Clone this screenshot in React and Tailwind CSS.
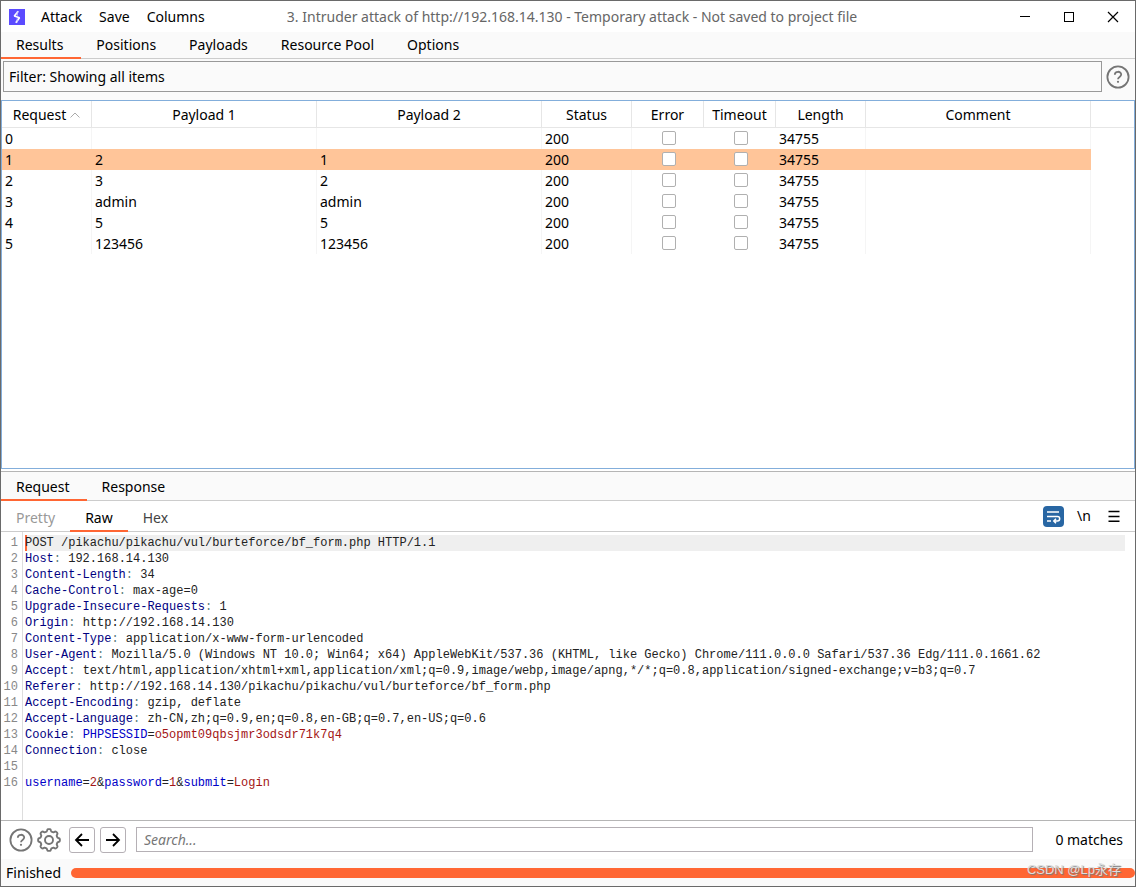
import React from "react";

const rows = [
  { id: 0, p1: "", p2: "" },
  { id: 1, p1: "2", p2: "1", selected: true },
  { id: 2, p1: "3", p2: "2" },
  { id: 3, p1: "admin", p2: "admin" },
  { id: 4, p1: "5", p2: "5" },
  { id: 5, p1: "123456", p2: "123456" },
];

const headers = [
  ["Host", "192.168.14.130"],
  ["Content-Length", "34"],
  ["Cache-Control", "max-age=0"],
  ["Upgrade-Insecure-Requests", "1"],
  ["Origin", "http://192.168.14.130"],
  ["Content-Type", "application/x-www-form-urlencoded"],
  ["User-Agent", "Mozilla/5.0 (Windows NT 10.0; Win64; x64) AppleWebKit/537.36 (KHTML, like Gecko) Chrome/111.0.0.0 Safari/537.36 Edg/111.0.1661.62"],
  ["Accept", "text/html,application/xhtml+xml,application/xml;q=0.9,image/webp,image/apng,*/*;q=0.8,application/signed-exchange;v=b3;q=0.7"],
  ["Referer", "http://192.168.14.130/pikachu/pikachu/vul/burteforce/bf_form.php"],
  ["Accept-Encoding", "gzip, deflate"],
  ["Accept-Language", "zh-CN,zh;q=0.9,en;q=0.8,en-GB;q=0.7,en-US;q=0.6"],
];

const Name = ({ children }) => <span className="text-[#00007f]">{children}</span>;
const Key = ({ children }) => <span className="text-[#0000c8]">{children}</span>;
const Val = ({ children }) => <span className="text-[#a31515]">{children}</span>;
const Colon = () => <span className="text-[#5f7f7f]">: </span>;

const lines = [
  "POST /pikachu/pikachu/vul/burteforce/bf_form.php HTTP/1.1",
  ...headers.map(([name, value]) => (
    <>
      <Name>{name}</Name>
      <Colon />
      {value}
    </>
  )),
  <>
    <Name>Cookie</Name>
    <Colon />
    <Key>PHPSESSID</Key>=<Val>o5opmt09qbsjmr3odsdr71k7q4</Val>
  </>,
  <>
    <Name>Connection</Name>
    <Colon />
    close
  </>,
  "",
  <>
    <Key>username</Key>=<Val>2</Val>&amp;<Key>password</Key>=<Val>1</Val>&amp;<Key>submit</Key>=<Val>Login</Val>
  </>,
];

function HelpIcon() {
  return (
    <svg className="size-6" viewBox="0 0 24 24" fill="none" stroke="#757575" strokeWidth="1.8">
      <circle cx="12" cy="12" r="10.6" />
      <path d="M8.800 9.800c0-4 6.400-4 6.400-.2 0 2.400-3.200 2.200-3.200 4.600" />
      <circle cx="12" cy="16.800" r="1.100" fill="#757575" stroke="none" />
    </svg>
  );
}

// Outline of a gear with eight rounded teeth, centred on (12, 12).
const gearPoints = Array.from({ length: 144 }, (_, i) => {
  const a = (i / 144) * Math.PI * 2;
  const r = 9.8 + 1.1 * Math.tanh(2.2 * Math.cos(8 * a));
  return `${(12 + r * Math.cos(a)).toFixed(2)},${(12 + r * Math.sin(a)).toFixed(2)}`;
}).join(" ");

function GearIcon() {
  return (
    <svg className="size-6" viewBox="0 0 24 24" fill="none" stroke="#757575" strokeWidth="1.9" strokeLinejoin="round">
      <circle cx="12" cy="12" r="4" />
      <polygon points={gearPoints} />
    </svg>
  );
}

function Arrow({ left }) {
  return (
    <svg className="size-4" viewBox="0 0 16 16" fill="none" stroke="#000" strokeWidth="1.8">
      <path d={left ? "M15 8H2M8 2L2 8l6 6" : "M1 8h13M8 2l6 6-6 6"} />
    </svg>
  );
}

function Tab({ children, active, tone = "text-black", pad = "pr-[18px] pl-[15px]" }) {
  return (
    <button
      type="button"
      className={`-mb-px border-b-2 ${pad} ${tone} ${active ? "border-[#ff6633]" : "border-transparent"}`}
    >
      {children}
    </button>
  );
}

const requestPad = "pt-[2px] pr-[17px] pl-[15px]";
const subPad = "pt-[4px] pr-[15px] pl-[15px]";
const thBase = "border-r border-b border-[#e6e6e6] p-0 pt-px text-center font-normal";
const tdBase = "border-r border-[#f5f5f5] py-0 pr-0 pl-[3px]";

function TickCell({ label }) {
  return (
    <td className="border-r border-transparent p-0 pb-[2px]">
      <input
        type="checkbox"
        aria-label={label}
        className="mx-auto block size-[14px] translate-x-px appearance-none rounded-[2px] border border-[#b0b0b0] bg-white"
      />
    </td>
  );
}

export default function App() {
  return (
    <div className="flex min-h-screen flex-col border border-[#6a6a6a] bg-white font-['Noto_Sans','Noto_Sans_CJK_SC',sans-serif] text-[14px] leading-5 text-black">
      <header className="grid h-[31px] shrink-0 grid-cols-[1fr_auto_1fr] items-center pl-2">
        <div className="flex items-center">
          <svg className="size-4" viewBox="0 0 16 16">
            <rect width="16" height="16" fill="#5b4bff" />
            <path d="M9.300 2.200L5.300 7l5.200 1.800-3.700 5" fill="none" stroke="#fff" strokeWidth="1.700" strokeLinejoin="bevel" />
            <path d="M8.200 2.500v4.200M8.200 9.300v4.200" fill="none" stroke="#c9c4ff" strokeWidth="1" />
          </svg>
          <nav className="ml-4 flex gap-[17px]">
            <button type="button">Attack</button>
            <button type="button">Save</button>
            <button type="button">Columns</button>
          </nav>
        </div>
        <h1 className="truncate text-center text-[#666]">
          3. Intruder attack of http://192.168.14.130 - Temporary attack - Not saved to project file
        </h1>
        <div className="flex justify-end">
          <button type="button" aria-label="Minimize" className="grid h-7 w-11 place-items-center">
            <svg className="size-3" viewBox="0 0 12 12" stroke="#000" shapeRendering="crispEdges"><path d="M1 5.500h10" /></svg>
          </button>
          <button type="button" aria-label="Maximize" className="grid h-7 w-11 place-items-center">
            <svg className="size-3" viewBox="0 0 12 12" fill="none" stroke="#000" shapeRendering="crispEdges"><path d="M1.500 1.500h9v9h-9z" /></svg>
          </button>
          <button type="button" aria-label="Close" className="grid h-7 w-11 place-items-center">
            <svg className="size-3" viewBox="0 0 12 12" stroke="#000" strokeWidth="1.200"><path d="M1 1l10 10M11 1L1 11" /></svg>
          </button>
        </div>
      </header>

      <nav className="flex h-[27px] shrink-0 border-b border-[#ccc] bg-[#fafafa]">
        <Tab active>Results</Tab>
        <Tab>Positions</Tab>
        <Tab>Payloads</Tab>
        <Tab>Resource Pool</Tab>
        <Tab>Options</Tab>
      </nav>

      <div className="flex h-[41px] shrink-0 items-start gap-1 bg-[#fafafa] pt-[2px] pr-[5px] pl-[2px]">
        <button type="button" className="h-[31px] flex-1 border border-[#999] px-[5px] text-left">
          Filter: Showing all items
        </button>
        <button type="button" aria-label="Help" className="grid h-[31px] place-items-center">
          <HelpIcon />
        </button>
      </div>

      <section className="flex-1 border border-[#83aedb]">
        <table className="w-full table-fixed border-separate border-spacing-0">
          <colgroup>
            <col className="w-[90px]" />
            <col className="w-[225px]" />
            <col className="w-[225px]" />
            <col className="w-[90px]" />
            <col className="w-[72px]" />
            <col className="w-[72px]" />
            <col className="w-[90px]" />
            <col className="w-[225px]" />
            <col />
          </colgroup>
          <thead>
            <tr className="h-[27px]">
              <th className={thBase}>
                <span className="flex items-center justify-center gap-1">
                  Request
                  <svg className="h-[6px] w-[10px]" viewBox="0 0 10 6" fill="none" stroke="#aaa"><path d="M.5 5.500L5 1l4.500 4.500" /></svg>
                </span>
              </th>
              <th className={thBase}>Payload 1</th>
              <th className={thBase}>Payload 2</th>
              <th className={thBase}>Status</th>
              <th className={thBase}>Error</th>
              <th className={thBase}>Timeout</th>
              <th className={thBase}>Length</th>
              <th className={thBase}>Comment</th>
              <td className="border-b border-[#e6e6e6] p-0" />
            </tr>
          </thead>
          <tbody>
            {rows.map((r) => (
              <tr key={r.id} className={r.selected ? "h-[21px] *:not-last:border-[#ffc599] *:not-last:bg-[#ffc599]" : "h-[21px]"}>
                <td className={tdBase}>{r.id}</td>
                <td className={tdBase}>{r.p1}</td>
                <td className={tdBase}>{r.p2}</td>
                <td className={tdBase}>200</td>
                <TickCell label={`Error, request ${r.id}`} />
                <TickCell label={`Timeout, request ${r.id}`} />
                <td className={tdBase}>34755</td>
                <td className={tdBase} />
                <td className="p-0" />
              </tr>
            ))}
          </tbody>
        </table>
      </section>

      <nav className="mt-[2px] flex h-[30px] shrink-0 border-t border-b border-t-[#b5b5b5] border-b-[#ccc] bg-[#fafafa]">
        <Tab active pad={requestPad}>Request</Tab>
        <Tab pad={requestPad}>Response</Tab>
      </nav>

      <div className="flex h-[31px] shrink-0 border-b border-[#ccc]">
        <Tab tone="text-[#999]" pad={subPad}>Pretty</Tab>
        <Tab active pad={subPad}>Raw</Tab>
        <Tab tone="text-[#444]" pad={subPad}>Hex</Tab>
        <div className="ml-auto flex items-center gap-[10px] pr-[11px]">
          <button type="button" aria-label="Word wrap" className="grid size-[21px] place-items-center rounded-[4px] bg-[#2866a3]">
            <svg className="size-[15px]" viewBox="0 0 15 15" fill="none" stroke="#fff" strokeWidth="1.500">
              <path d="M1 3h12M1 7.500h10.500a2.200 2.200 0 0 1 0 4.400H8M1 12h4M10 9.800L7.800 12l2.200 2.200" />
            </svg>
          </button>
          <button type="button" aria-label="Show newlines" className="w-5 text-center">\n</button>
          <button type="button" aria-label="Menu" className="grid size-5 place-items-center">
            <svg className="size-3" viewBox="0 0 12 12" stroke="#000" strokeWidth="1.400">
              <path d="M.5 1.500h11M.5 6.500h11M.5 11.200h11" />
            </svg>
          </button>
        </div>
      </div>

      <main className="flex shrink-0 border-b border-[#b5b5b5] pr-[10px] font-['Liberation_Mono',monospace] text-[12px] leading-4">
        <ol className="w-[22px] border-r border-[#ddd] pt-[3px] pr-1 text-right text-[#888]">
          {lines.map((_, i) => (
            <li key={i}>{i + 1}</li>
          ))}
        </ol>
        <div className="min-w-0 flex-1 pt-[3px] pb-[29px] text-[#222]">
          {lines.map((line, i) => (
            <div
              key={i}
              className={i === 0 ? "ml-[2px] h-4 bg-[#efefef] whitespace-pre shadow-[inset_2px_0_#ff6633]" : "ml-[2px] h-4 whitespace-pre"}
            >
              {line}
            </div>
          ))}
        </div>
      </main>

      <div className="flex h-[38px] shrink-0 items-center pr-3 pb-px pl-2">
        <button type="button" aria-label="Help"><HelpIcon /></button>
        <button type="button" aria-label="Settings" className="ml-1"><GearIcon /></button>
        <button type="button" aria-label="Previous match" className="ml-2 grid size-[26px] place-items-center rounded-[3px] border border-[#b5b0b5]"><Arrow left /></button>
        <button type="button" aria-label="Next match" className="ml-[5px] grid size-[26px] place-items-center rounded-[3px] border border-[#b5b0b5]"><Arrow /></button>
        <input
          type="text"
          aria-label="Search"
          placeholder="Search..."
          className="ml-[10px] h-[25px] min-w-0 flex-1 border border-[#b5b0b5] px-[7px] outline-none placeholder:text-[#777] placeholder:italic"
        />
        <span className="ml-[22px]">0 matches</span>
      </div>

      <footer className="relative flex h-[27px] shrink-0 items-center gap-[10px] bg-[#fafafa] pt-px pl-[5px]">
        <span>Finished</span>
        <div role="progressbar" aria-label="Attack progress" aria-valuenow={100} className="h-[10px] flex-1 rounded-full bg-[#ff6633]" />
        <span className="absolute right-[14px] bottom-[6px] font-['Liberation_Sans','Noto_Sans_CJK_SC',sans-serif] text-[13px] text-[#ddd] [text-shadow:1px_1px_1px_#777]">
          CSDN @Lp永存
        </span>
      </footer>
    </div>
  );
}
